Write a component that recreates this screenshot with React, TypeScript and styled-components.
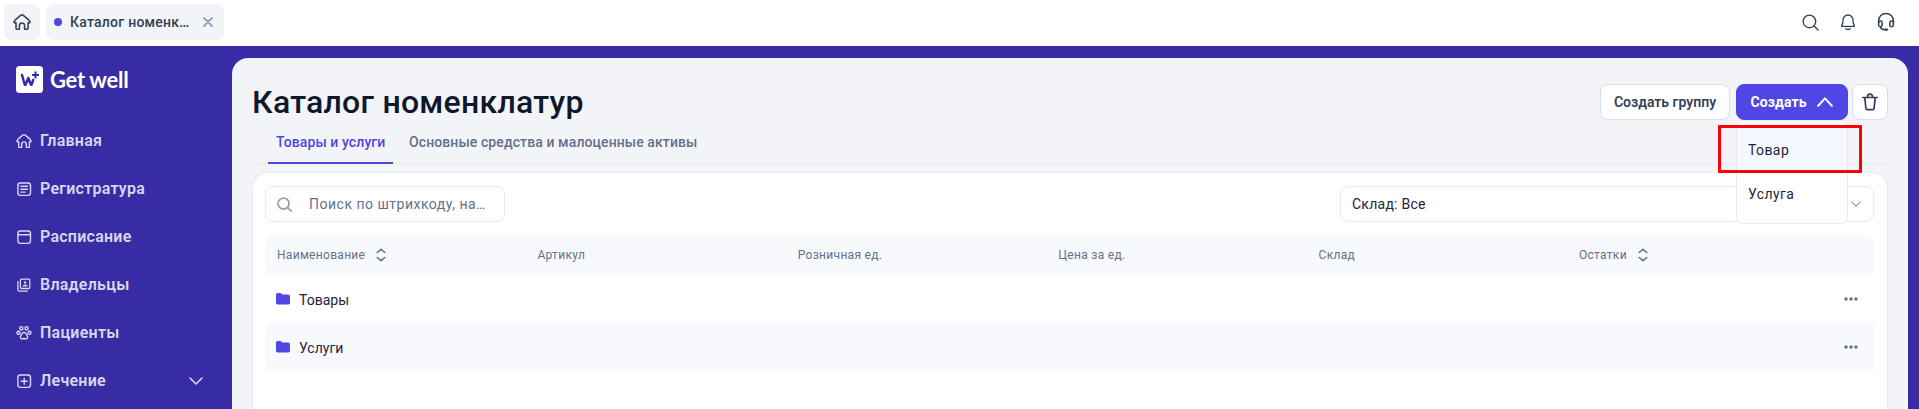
import React from 'react';
import styled, { createGlobalStyle, css } from 'styled-components';

const GlobalStyle = createGlobalStyle`
  * { box-sizing: border-box; }
  html, body, #root { height: 100%; }
  body {
    margin: 0;
    overflow: hidden;
    font-family: Roboto, 'Liberation Sans', sans-serif;
    background: #fff;
  }
  svg { display: block; flex: none; }
`;

const Page = styled.div`
  display: flex;
  flex-direction: column;
  height: 409px;
  overflow: hidden;
`;

const TopBar = styled.header`
  display: flex;
  align-items: center;
  gap: 6px;
  height: 46px;
  flex: none;
  padding: 4px 24px 6px 4px;
  background: #fff;
  color: #334155;
`;

const HomeTab = styled.div`
  display: grid;
  place-items: center;
  width: 36px;
  height: 36px;
  border-radius: 8px;
  background: #f2f4f8;
`;

const PageTab = styled.div`
  display: flex;
  align-items: center;
  width: 178px;
  height: 36px;
  padding: 0 11px 0 8px;
  border-radius: 8px;
  background: #f2f4f8;
  color: #94a3b8;
`;

const Dot = styled.span`
  width: 8px;
  height: 8px;
  margin-right: 8px;
  border-radius: 50%;
  background: #4f46e5;
`;

const PageTabText = styled.span`
  flex: 1;
  color: #334155;
  font-size: 14px;
  font-weight: 500;
  letter-spacing: 0.25px;
  white-space: nowrap;
`;

const TopIcons = styled.div`
  display: flex;
  align-items: center;
  gap: 20px;
  margin-left: auto;
`;

const Body = styled.div`
  display: flex;
  flex: 1;
  min-height: 0;
  background: #372ca3;
`;

const Sidebar = styled.aside`
  width: 232px;
  flex: none;
  padding: 20px 0 0 16px;
`;

const Brand = styled.div`
  display: flex;
  align-items: center;
  gap: 7px;
  height: 27px;
  margin-bottom: 24px;
  color: #fff;
  font-family: Lato, sans-serif;
  font-size: 22px;
  font-weight: 700;
  letter-spacing: -0.3px;
  line-height: 26px;
  white-space: nowrap;
`;

const NavItem = styled.div`
  display: flex;
  align-items: center;
  gap: 8px;
  height: 48px;
  padding-right: 29px;
  color: #d8d6f3;
  font-size: 16px;
  font-weight: 600;
  line-height: 20px;
  letter-spacing: 0.25px;

  span { flex: 1; }
`;

const Main = styled.main`
  display: flex;
  flex-direction: column;
  width: 1676px;
  margin-top: 12px;
  padding: 26px 20px 0;
  border-radius: 16px 16px 0 0;
  background: #f2f4f8;
`;

const Heading = styled.div`
  display: flex;
  align-items: center;
  justify-content: space-between;
  height: 36px;
  flex: none;
`;

const Title = styled.h1`
  margin: 0;
  color: #0f172a;
  font-size: 32px;
  font-weight: 500;
  line-height: 36px;
  letter-spacing: 0.25px;
`;

const Actions = styled.div`
  display: flex;
`;

const Button = styled.button<{ $primary?: boolean; $width: number; $gap?: number }>`
  display: flex;
  align-items: center;
  justify-content: center;
  gap: 10px;
  width: ${(p) => p.$width}px;
  height: 36px;
  margin: 0 0 0 ${(p) => p.$gap ?? 0}px;
  padding: ${(p) => (p.$primary ? '0 1px 0 0' : '0')};
  border: 1px solid ${(p) => (p.$primary ? '#4f46e5' : '#d9dbf0')};
  border-radius: 8px;
  background: ${(p) => (p.$primary ? '#4f46e5' : '#fff')};
  color: ${(p) => (p.$primary ? '#fff' : '#334155')};
  font-family: inherit;
  font-size: 14px;
  font-weight: ${(p) => (p.$primary ? 700 : 600)};
  letter-spacing: ${(p) => (p.$primary ? 0.1 : 0)}px;
  white-space: nowrap;
`;

const MenuAnchor = styled.div`
  position: relative;
  margin-left: 6px;
`;

const Menu = styled.div`
  position: absolute;
  z-index: 2;
  top: 36px;
  left: 0;
  width: 112px;
  height: 104px;
  padding: 6px 0;
  border: 1px solid #e8eaf0;
  border-radius: 8px;
  background: #fff;
`;

const MenuItem = styled.div<{ $active?: boolean }>`
  height: 44px;
  padding-left: 11px;
  line-height: 47px;
  color: #1e2538;
  font-size: 14px;
  letter-spacing: 0.4px;
  background: ${(p) => (p.$active ? '#f5f8ff' : 'transparent')};
`;

const Highlight = styled.div`
  position: absolute;
  z-index: 3;
  top: 41px;
  left: -18px;
  width: 144px;
  height: 48px;
  border: 3px solid #fb0007;
  border-radius: 1px;
`;

const Tabs = styled.div`
  display: flex;
  gap: 8px;
  height: 44px;
  flex: none;
  padding-left: 16px;
  border-bottom: 1px solid #e8eaf0;
`;

const Tab = styled.div<{ $active?: boolean }>`
  height: 44px;
  padding: 0 8px;
  color: #64708b;
  font-size: 14px;
  font-weight: 500;
  line-height: 44px;
  letter-spacing: 0.1px;
  white-space: nowrap;
  ${(p) =>
    p.$active &&
    css`
      width: 125px;
      color: #4f46e5;
      border-bottom: 2px solid #4f46e5;
    `}
`;

const Card = styled.section`
  flex: 1;
  margin-top: 8px;
  padding: 13px 12px 0;
  border: 1px solid #e8eaf0;
  border-bottom: 0;
  border-radius: 16px 16px 0 0;
  background: #fff;
`;

const Filters = styled.div`
  display: flex;
  justify-content: space-between;
  margin: 0 1px 13px 0;
`;

const Field = styled.div<{ $width: number }>`
  display: flex;
  align-items: center;
  width: ${(p) => p.$width}px;
  height: 36px;
  padding: 0 12px 0 11px;
  border: 1px solid #e9e8f5;
  border-radius: 8px;
  color: #94a3b8;
  font-size: 14px;
  white-space: nowrap;
`;

const Placeholder = styled.span`
  margin-left: 17px;
  color: #64708b;
  letter-spacing: 0.5px;
`;

const FieldValue = styled.span`
  flex: 1;
  color: #1e2538;
  letter-spacing: 0.25px;
`;

const HeaderRow = styled.div`
  display: grid;
  grid-template-columns: repeat(6, 260.4px);
  align-items: center;
  height: 40px;
  padding-left: 12px;
  border-radius: 8px;
  background: #f8f9fd;
  color: #64708b;
  font-size: 12px;
  letter-spacing: 0.3px;
`;

const HeaderCell = styled.div`
  display: flex;
  align-items: center;
  gap: 11px;
`;

const Row = styled.div<{ $striped?: boolean }>`
  display: flex;
  align-items: center;
  gap: 9px;
  height: 48px;
  padding: 0 17px 0 11px;
  border-radius: 8px 0 0 8px;
  background: ${(p) => (p.$striped ? '#f8f9fd' : '#fff')};
  color: #1e2538;
  font-size: 14px;

  span { flex: 1; padding-top: 2px; }
`;

type IconProps = {
  size?: number;
  w?: number;
  h?: number;
  box?: string;
  sw?: number;
  children: React.ReactNode;
};

const Icon = ({ size = 16, w, h, box, sw = 1.4, children }: IconProps) => (
  <svg
    width={w ?? size}
    height={h ?? size}
    viewBox={box ?? `0 0 ${w ?? size} ${h ?? size}`}
    fill="none"
    stroke="currentColor"
    strokeWidth={sw}
    strokeLinecap="round"
    strokeLinejoin="round"
  >
    {children}
  </svg>
);

const HomeIcon = ({ size = 16, sw = 1.4 }: { size?: number; sw?: number }) => (
  <Icon size={size} box="0 0 16 16" sw={sw}>
    <path d="M.9 7.8 2.3 5.9 6.8 2.1a1.9 1.9 0 0 1 2.4 0l4.5 3.8 1.4 1.9c.1.6-.2 1-.8 1h-.9v5c0 .4-.2.6-.6.6h-2.5v-3.2a2.3 2.3 0 0 0-4.6 0v3.2H3.3c-.4 0-.6-.2-.6-.6v-5h-.9c-.7 0-1-.4-.9-1Z" />
  </Icon>
);

const RegistryIcon = () => (
  <Icon>
    <rect x="1.9" y="2" width="12.6" height="12.4" rx="2.6" />
    <path d="M4.9 5.3h6.6M4.9 8.2h6.6M4.9 11.1h4.3" />
  </Icon>
);

const CalendarIcon = () => (
  <Icon>
    <rect x="1.9" y="2" width="12.6" height="12.4" rx="2.6" />
    <path d="M2 5.8h12.4" />
  </Icon>
);

const OwnersIcon = () => (
  <Icon sw={1.3}>
    <rect x="4.4" y="2.1" width="9.4" height="9.4" rx="1.2" />
    <path d="M1.9 4.6v7.8c0 1 .8 1.7 1.7 1.7h7.8" />
    <circle cx="9.1" cy="5.5" r="1.2" fill="currentColor" stroke="none" />
    <path d="M6.5 9.6c.2-1.3 1.2-2.1 2.6-2.1s2.4.8 2.6 2.1Z" fill="currentColor" stroke="none" />
  </Icon>
);

const PawIcon = () => (
  <Icon sw={1.4}>
    <ellipse cx="5.4" cy="3.3" rx="1.6" ry="1.7" />
    <ellipse cx="10.6" cy="3.3" rx="1.6" ry="1.7" />
    <ellipse cx="2.5" cy="7.8" rx="1.5" ry="1.6" />
    <ellipse cx="13.5" cy="7.8" rx="1.5" ry="1.6" />
    <path d="M8 7.2c-2 0-2.2 2.1-3 3.2-1.2 1.8-.6 3.6 1.1 3.400h3.800c1.700.2 2.300-1.600 1.100-3.400-.8-1.100-1-3.200-3-3.200Z" />
  </Icon>
);

const TreatmentIcon = () => (
  <Icon>
    <rect x="1.9" y="2" width="12.6" height="12.4" rx="2.6" />
    <path d="M8.2 5.2v6M5.2 8.2h6" />
  </Icon>
);

const ChevronDown = ({ w, h, sw }: { w: number; h: number; sw: number }) => (
  <Icon w={w} h={h} box="-1 -1 14 8" sw={sw}>
    <path d="m0 0 6 6 6-6" />
  </Icon>
);

const SortIcon = () => (
  <Icon w={10} h={14} sw={1.6}>
    <path d="M1.2 4.5 5 1.3l3.8 3.2M1.2 9.5 5 12.7l3.8-3.2" />
  </Icon>
);

const SearchIcon = ({ size, sw }: { size: number; sw: number }) => (
  <Icon size={size} box="0 0 16 16" sw={sw}>
    <circle cx="7" cy="7" r="5.9" />
    <path d="m11.3 11.3 3.8 3.8" />
  </Icon>
);

const FolderIcon = () => (
  <svg width="14" height="12" viewBox="0 0 14 12" fill="#4f46e5">
    <path d="M0 2C0 .8.7 0 1.9 0h2.7c.8 0 1.1 1.5 2 1.5h5.2c1.4 0 2.2.8 2.2 2.1v5.8c0 1.4-.8 2.2-2.2 2.2H2.1C.8 11.6 0 10.8 0 9.5Z" />
  </svg>
);

const MoreIcon = () => (
  <svg width="14" height="4" viewBox="0 0 14 4" fill="#64708b">
    <circle cx="2" cy="2" r="1.7" />
    <circle cx="7" cy="2" r="1.7" />
    <circle cx="12" cy="2" r="1.7" />
  </svg>
);

const LogoMark = () => (
  <svg width="27" height="27" viewBox="0 0 27 27" fill="none">
    <rect width="27" height="27" rx="3.5" fill="#fff" />
    <path
      d="m6 9 2.7 9.3c.2.6.8.6 1 0L12.3 12l2.4 6.3c.2.6.8.6 1 0l1.5-4.3"
      stroke="#372ca3"
      strokeWidth="2.5"
      strokeLinecap="round"
      strokeLinejoin="round"
    />
    <path d="M19.500 5.500v7M16 9h7" stroke="#372ca3" strokeWidth="2" />
  </svg>
);

const navigation = [
  { label: 'Главная', icon: <HomeIcon /> },
  { label: 'Регистратура', icon: <RegistryIcon /> },
  { label: 'Расписание', icon: <CalendarIcon /> },
  { label: 'Владельцы', icon: <OwnersIcon /> },
  { label: 'Пациенты', icon: <PawIcon /> },
  { label: 'Лечение', icon: <TreatmentIcon />, expandable: true },
];

const columns = [
  { label: 'Наименование', sortable: true },
  { label: 'Артикул' },
  { label: 'Розничная ед.' },
  { label: 'Цена за ед.' },
  { label: 'Склад' },
  { label: 'Остатки', sortable: true },
];

export default function App() {
  return (
    <Page>
      <GlobalStyle />
      <TopBar>
        <HomeTab>
          <HomeIcon size={18} sw={1.4} />
        </HomeTab>
        <PageTab>
          <Dot />
          <PageTabText>Каталог номенк…</PageTabText>
          <Icon w={10} h={10} sw={1.8}>
            <path d="m1 1 8 8M9 1 1 9" />
          </Icon>
        </PageTab>
        <TopIcons>
          <SearchIcon size={17} sw={1.3} />
          <Icon w={18} h={20} box="1 0 18 20" sw={1.3}>
            <path d="M3.7 14.3v-.8C4.8 12.300 5 10.800 5 8a5 5 0 0 1 10 0c0 2.800.2 4.300 1.300 5.500v.8Z" />
            <path d="M7.9 16.9c1.200.7 3 .7 4.200 0" />
          </Icon>
          <Icon w={18} h={20} sw={1.5}>
            <path d="M1.600 11V8.800a7.400 7.400 0 0 1 14.800 0V11" />
            <rect x="1.6" y="9" width="3.6" height="5.8" rx="1.7" />
            <rect x="12.8" y="9" width="3.6" height="5.8" rx="1.7" />
            <path d="M3.600 15c.3 1.500 1.500 2.500 3.200 2.500H9" />
            <path d="M8.700 17.600h1.300" strokeWidth="2.4" />
          </Icon>
        </TopIcons>
      </TopBar>
      <Body>
        <Sidebar>
          <Brand>
            <LogoMark />
            Get well
          </Brand>
          {navigation.map((item) => (
            <NavItem key={item.label}>
              {item.icon}
              <span>{item.label}</span>
              {item.expandable && <ChevronDown w={14} h={8} sw={1.6} />}
            </NavItem>
          ))}
        </Sidebar>
        <Main>
          <Heading>
            <Title>Каталог номенклатур</Title>
            <Actions>
              <Button $width={130}>Создать группу</Button>
              <MenuAnchor>
                <Button $primary $width={112}>
                  Создать
                  <Icon w={16} h={10} sw={2}>
                    <path d="m1.200 8.800 6.800-7.400 6.800 7.400" />
                  </Icon>
                </Button>
                <Menu>
                  <MenuItem $active>Товар</MenuItem>
                  <MenuItem>Услуга</MenuItem>
                </Menu>
                <Highlight />
              </MenuAnchor>
              <Button $width={36} $gap={4} aria-label="Удалить">
                <Icon w={16} h={18} sw={1.7}>
                  <path d="M.9 4.500h14.200M2.800 4.700l1.100 10.700c.1.900.6 1.300 1.400 1.300h5.400c.8 0 1.300-.4 1.400-1.300l1.100-10.700M5.400 4.200c0-4.100 5.200-4.100 5.200 0" />
                </Icon>
              </Button>
            </Actions>
          </Heading>
          <Tabs>
            <Tab $active>Товары и услуги</Tab>
            <Tab>Основные средства и малоценные активы</Tab>
          </Tabs>
          <Card>
            <Filters>
              <Field $width={240}>
                <SearchIcon size={15} sw={1.9} />
                <Placeholder>Поиск по штрихкоду, на…</Placeholder>
              </Field>
              <Field $width={534}>
                <FieldValue>Склад: Все</FieldValue>
                <ChevronDown w={10} h={6} sw={1.9} />
              </Field>
            </Filters>
            <HeaderRow>
              {columns.map((column) => (
                <HeaderCell key={column.label}>
                  {column.label}
                  {column.sortable && <SortIcon />}
                </HeaderCell>
              ))}
            </HeaderRow>
            <Row>
              <FolderIcon />
              <span>Товары</span>
              <MoreIcon />
            </Row>
            <Row $striped>
              <FolderIcon />
              <span>Услуги</span>
              <MoreIcon />
            </Row>
          </Card>
        </Main>
      </Body>
    </Page>
  );
}
